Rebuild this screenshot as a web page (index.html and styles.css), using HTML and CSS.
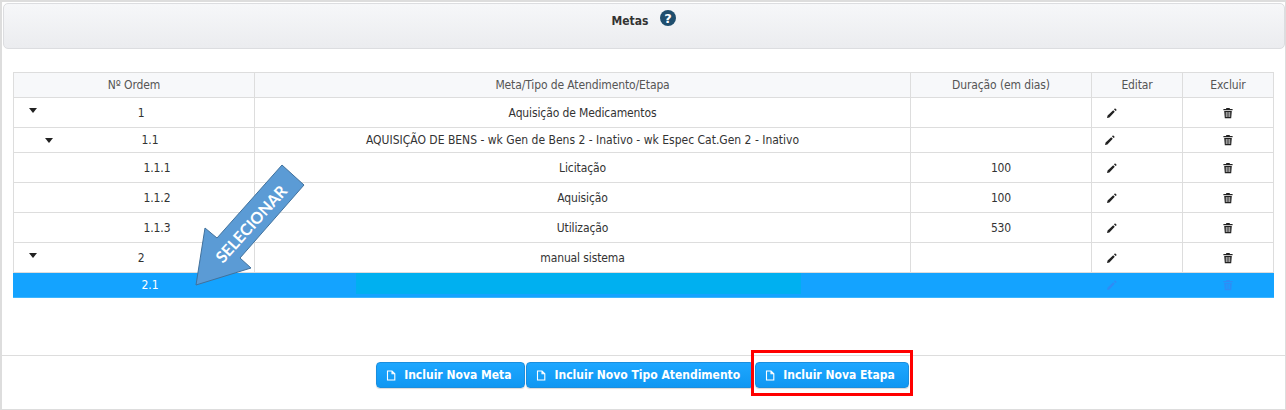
FILE: index.html
```html
<!DOCTYPE html>
<html>
<head>
    <title>Metas</title>
    <link rel="stylesheet" href="styles.css">
</head>
<body>
    <div class="panel">
        <div class="panel-head">
            <span class="panel-title">Metas</span>
            <svg class="help-icon" width="16" height="16" viewBox="0 0 16 16">
                <circle cx="8" cy="8" r="8" fill="#1f4e6e"/>
                <text x="8" y="12.5" text-anchor="middle" class="help-mark">?</text>
            </svg>
        </div>

        <div class="table-wrap">
            <table class="grid">
                <thead>
                    <tr>
                        <th class="col-order">Nº Ordem</th>
                        <th class="col-name">Meta/Tipo de Atendimento/Etapa</th>
                        <th class="col-days">Duração (em dias)</th>
                        <th class="col-act">Editar</th>
                        <th class="col-act">Excluir</th>
                    </tr>
                </thead>
                <tbody>
                    <tr class="row-tall">
                        <td class="order lvl-1"><i class="caret"></i>1</td>
                        <td>Aquisição de Medicamentos</td>
                        <td></td>
                        <td class="act"><svg class="ico ico-edit"><use href="#pencil"/></svg></td>
                        <td class="act"><svg class="ico"><use href="#trash"/></svg></td>
                    </tr>
                    <tr class="row-short">
                        <td class="order lvl-2"><i class="caret"></i>1.1</td>
                        <td class="name-long">AQUISIÇÃO DE BENS - wk Gen de Bens 2 - Inativo - wk Espec Cat.Gen 2 - Inativo</td>
                        <td></td>
                        <td class="act"><svg class="ico ico-edit ico-shift"><use href="#pencil"/></svg></td>
                        <td class="act"><svg class="ico"><use href="#trash"/></svg></td>
                    </tr>
                    <tr class="row-tall">
                        <td class="order lvl-3">1.1.1</td>
                        <td>Licitação</td>
                        <td>100</td>
                        <td class="act"><svg class="ico ico-edit"><use href="#pencil"/></svg></td>
                        <td class="act"><svg class="ico"><use href="#trash"/></svg></td>
                    </tr>
                    <tr class="row-tall">
                        <td class="order lvl-3">1.1.2</td>
                        <td>Aquisição</td>
                        <td>100</td>
                        <td class="act"><svg class="ico ico-edit"><use href="#pencil"/></svg></td>
                        <td class="act"><svg class="ico"><use href="#trash"/></svg></td>
                    </tr>
                    <tr class="row-tall">
                        <td class="order lvl-3">1.1.3</td>
                        <td>Utilização</td>
                        <td>530</td>
                        <td class="act"><svg class="ico ico-edit"><use href="#pencil"/></svg></td>
                        <td class="act"><svg class="ico"><use href="#trash"/></svg></td>
                    </tr>
                    <tr class="row-tall">
                        <td class="order lvl-1"><i class="caret"></i>2</td>
                        <td>manual sistema</td>
                        <td></td>
                        <td class="act"><svg class="ico ico-edit"><use href="#pencil"/></svg></td>
                        <td class="act"><svg class="ico"><use href="#trash"/></svg></td>
                    </tr>
                    <tr class="row-selected">
                        <td class="order lvl-2">2.1</td>
                        <td class="name-cell"><div class="name-mark"></div></td>
                        <td></td>
                        <td class="act"><svg class="ico ico-edit"><use href="#pencil"/></svg></td>
                        <td class="act"><svg class="ico"><use href="#trash"/></svg></td>
                    </tr>
                </tbody>
            </table>
        </div>

        <div class="panel-foot">
            <button class="btn"><svg class="btn-ico" viewBox="0 0 10 11"><use href="#file"/></svg>Incluir Nova Meta</button>
            <button class="btn"><svg class="btn-ico" viewBox="0 0 10 11"><use href="#file"/></svg>Incluir Novo Tipo Atendimento</button>
            <span class="btn-callout">
                <button class="btn"><svg class="btn-ico" viewBox="0 0 10 11"><use href="#file"/></svg>Incluir Nova Etapa</button>
            </span>
        </div>
    </div>

    <!-- arrow callout -->
    <svg class="arrow" width="1286" height="410" viewBox="0 0 1286 410">
        <polygon points="196,285 205,228 217,238 282,165 304,185 240,258 251,268" fill="#5b9bd5" stroke="#41719c"/>
        <text class="arrow-label" transform="translate(223,264) rotate(-48)">SELECIONAR</text>
    </svg>

    <!-- icon defs -->
    <svg class="defs" width="0" height="0">
        <symbol id="pencil" viewBox="0 0 12 12">
            <path d="M1 11 L1.6 8.6 L7.2 3.2 L8.8 4.8 L3.4 10.4 Z M8 2.4 L9 1.2 L10.8 3 L9.6 4 Z" fill="currentColor"/>
        </symbol>
        <symbol id="trash" viewBox="0 0 12 12">
            <path d="M4.4 1 H7.6 L8 2 H10.6 V3.2 H1.4 V2 H4 Z M2.2 4 H9.8 L9.2 11.2 H2.8 Z" fill="currentColor"/>
            <path class="trash-slots" d="M4.3 5 V10 M6 5 V10 M7.7 5 V10"/>
        </symbol>
        <symbol id="file" viewBox="0 0 10 11">
            <path d="M1.5 1 H6 L8.8 3.8 V10 H1.5 Z M6 1 V3.8 H8.8" fill="none" stroke="#fff" stroke-width="1.1"/>
        </symbol>
    </svg>
</body>
</html>
```

FILE: styles.css
```css
/* General page */
html, body {
    margin: 0;
    height: 410px;
    overflow: hidden;
    background: #fff;
}

body {
    font-family: "DejaVu Sans", Tahoma, sans-serif;
    font-stretch: condensed;
    font-size: 12px;
    color: #333;
    position: relative;
}

/* Outer panel */
.panel {
    box-sizing: border-box;
    width: 1286px;
    height: 410px;
    border: 1px solid #ddd;
    border-top-width: 2px;
    border-left-width: 2px;
    display: flex;
    flex-direction: column;
}

.panel-head {
    box-sizing: border-box;
    height: 46px;
    margin: 1px 0 0 1px;
    border: 1px solid #dcdde0;
    border-radius: 5px;
    background: linear-gradient(to bottom, #f6f7f9, #ebecef);
    display: flex;
    justify-content: center;
    gap: 12px;
    padding-top: 6px;
}

.panel-title {
    font-weight: bold;
    color: #333;
    margin-top: 4px;
}

.help-icon {
    display: block;
}

.help-mark {
    font: bold 13px "DejaVu Sans", sans-serif;
    fill: #fff;
}

/* Table */
.table-wrap {
    padding: 23px 11px 0;
    flex: 1;
}

.grid {
    width: 1261px;
    border-collapse: collapse;
    table-layout: fixed;
}

.grid th, .grid td {
    padding: 0;
    border: 1px solid #ddd;
    text-align: center;
    font-weight: normal;
    letter-spacing: -0.12px;
}

.grid td.name-long {
    letter-spacing: 0;
}

.grid th {
    height: 24px;
    background: #f7f8fa;
    color: #555;
}

.col-order { width: 240px; }
.col-days { width: 180px; }
.col-act { width: 90px; }

.row-tall td { height: 29px; }
.row-short td { height: 24px; }

.grid td.order {
    position: relative;
}

.lvl-1 { padding-left: 14px !important; }
.lvl-2 { padding-left: 32px !important; }
.lvl-3 { padding-left: 46px !important; }

.caret {
    position: absolute;
    top: 10px;
    left: 15px;
    width: 0;
    height: 0;
    border-left: 4px solid transparent;
    border-right: 4px solid transparent;
    border-top: 5px solid #222;
}

.lvl-2 .caret {
    left: 31px;
}

/* Selected row */
.row-selected td {
    height: 24px;
    background: #14a3ff;
    color: #fff;
    border-color: #14a3ff;
    border-bottom-color: #3db5ff;
}

.grid td.name-cell {
    vertical-align: top;
}

.name-mark {
    width: 445px;
    height: 21px;
    margin-left: 101px;
    background: #00b0f0;
}

.row-selected .ico {
    color: #2f8cf5;
    --slot: #14a3ff;
}

/* Icons */
.act {
    color: #222;
}

.ico {
    display: block;
    width: 12px;
    height: 12px;
    margin: 0 auto;
}

.trash-slots {
    stroke: var(--slot, #fff);
    stroke-width: 0.7;
}

.ico-edit {
    position: relative;
    left: -25px;
}

.ico-shift {
    left: -27px;
}

.defs {
    position: absolute;
}

/* Footer */
.panel-foot {
    box-sizing: border-box;
    height: 54px;
    border-top: 1px solid #ddd;
    display: flex;
    justify-content: center;
    align-items: flex-start;
    padding: 6px 2px 0 0;
    gap: 1px;
}

.btn {
    box-sizing: border-box;
    height: 26px;
    padding: 0 13px 0 9px;
    border: 1px solid #1a8ede;
    border-radius: 4px;
    background: linear-gradient(to bottom, #1ea7ff, #0f97f2);
    color: #fff;
    font: bold 12px "DejaVu Sans", Tahoma, sans-serif;
    font-stretch: condensed;
    display: flex;
    align-items: center;
    box-shadow: 0 1px 1px rgba(0, 0, 0, 0.15);
}

.btn-ico {
    width: 10px;
    height: 11px;
    margin-right: 8px;
}

.btn-callout {
    position: relative;
    display: block;
}

.btn-callout::after {
    content: "";
    position: absolute;
    left: -4px;
    right: -4px;
    top: -12px;
    bottom: -8px;
    border: 3px solid #f00;
}

/* Arrow callout */
.arrow {
    position: absolute;
    top: 0;
    left: 0;
    pointer-events: none;
}

.arrow-label {
    font: bold 16px Lato, sans-serif;
    fill: #fff;
}
```
